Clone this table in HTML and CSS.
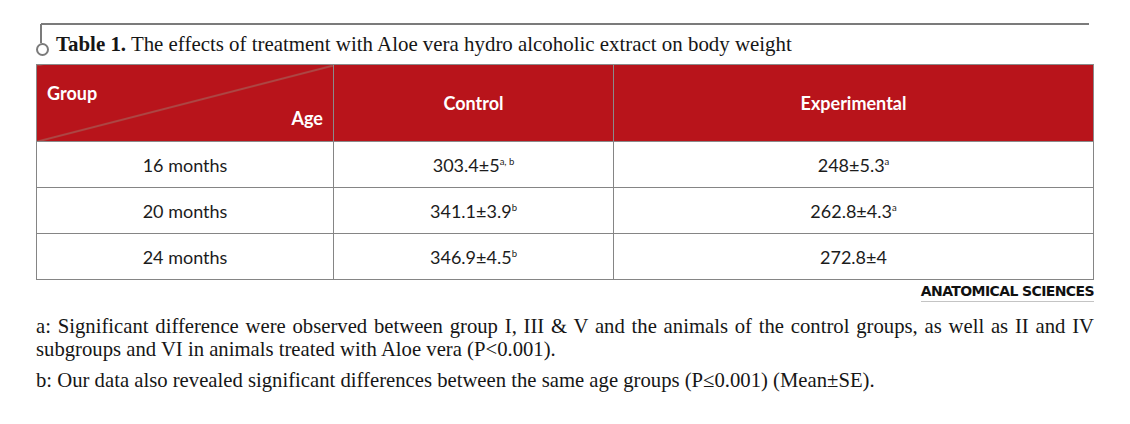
FILE: index.html
```html
<!DOCTYPE html>
<html lang="en">
<head>
<meta charset="utf-8">
<title>Table 1</title>
<link rel="stylesheet" href="styles.css">
</head>
<body>
<div class="page">
  <div class="caption">
    <p class="title"><b>Table 1.</b> The effects of treatment with Aloe vera hydro alcoholic extract on body weight</p>
  </div>
  <table class="data">
    <thead>
      <tr>
        <th class="corner">
          <div class="corner-group">Group</div>
          <div class="corner-age">Age</div>
        </th>
        <th class="col-control">Control</th>
        <th>Experimental</th>
      </tr>
    </thead>
    <tbody>
      <tr><td>16 months</td><td>303.4±5<sup>a, b</sup></td><td>248±5.3<sup>a</sup></td></tr>
      <tr><td>20 months</td><td>341.1±3.9<sup>b</sup></td><td>262.8±4.3<sup>a</sup></td></tr>
      <tr><td>24 months</td><td>346.9±4.5<sup>b</sup></td><td>272.8±4</td></tr>
    </tbody>
  </table>
  <div class="brand-row"><span class="brand">ANAT<span class="brand-o">O</span>MICAL SCIENCES</span></div>
  <div class="notes">
    <p class="note">a: Significant difference were observed between group I, III &amp; V and the animals of the control groups, as well as II and IV subgroups and VI in animals treated with Aloe vera (P&lt;0.001).</p>
    <p class="note">b: Our data also revealed significant differences between the same age groups (P≤0.001) (Mean±SE).</p>
  </div>
</div>
</body>
</html>
```

FILE: styles.css
```css
* { box-sizing: border-box; }
html, body { margin: 0; padding: 0; background: #fff; }
body { width: 1130px; height: 424px; overflow: hidden; }

.page {
  padding: 23px 36px 0 36px;
  width: 1130px;
  color: #1a1a1a;
}

.caption {
  position: relative;
  margin-left: 5px;
  width: 1048px;
  border-top: 2px solid #7b7b7b;
  padding: 7px 0 0 15px;
  height: 41px;
}
.caption::before {
  content: "";
  position: absolute;
  left: -1px;
  top: -1px;
  width: 2px;
  height: 19px;
  background: #7b7b7b;
}
.caption::after {
  content: "";
  position: absolute;
  left: -5px;
  top: 18px;
  width: 9px;
  height: 9px;
  border: 2px solid #7b7b7b;
  border-radius: 50%;
  background: #fff;
}
.title {
  margin: 0;
  font-family: "Liberation Serif", serif;
  font-size: 20.9px;
  line-height: 24px;
  color: #161616;
  white-space: nowrap;
}
.title b { font-weight: bold; }

.data {
  width: 1058px;
  border-collapse: collapse;
  font-family: Lato, "Open Sans", sans-serif;
  table-layout: fixed;
}
.data th, .data td {
  border: 1px solid #858585;
}
.data th {
  background: #b8141b;
  color: #fff;
  font-weight: bold;
  font-size: 18px;
  height: 77px;
  padding: 0;
  text-align: center;
  vertical-align: middle;
  border-color: #8a8a8a;
}
.data th.corner {
  width: 297px;
  padding: 16px 10px 12px 10px;
  background-color: #b8141b;
  background-image: linear-gradient(to bottom right, rgba(0,0,0,0) calc(50% - 1px), #a0766a 50%, rgba(0,0,0,0) calc(50% + 1px));
}
.data th.col-control { width: 280px; }
.corner-group { text-align: left; line-height: 22px; }
.corner-age { text-align: right; line-height: 22px; margin-top: 3px; }

.data td {
  height: 46px;
  font-size: 18px;
  text-align: center;
  color: #1c1c1c;
  padding: 0;
}
.data sup {
  font-size: 9.5px;
  vertical-align: 7px;
  line-height: 0;
}

.brand-row {
  display: flex;
  justify-content: flex-end;
  padding-top: 4px;
}
.brand {
  font-family: "DejaVu Sans", "Liberation Sans", sans-serif;
  font-weight: bold;
  font-size: 14px;
  letter-spacing: -0.6px;
  line-height: 15px;
  color: #111;
  padding: 0 0 2px 0;
  border-bottom: 1px solid #c4c4c4;
}

.notes {
  padding-top: 13px;
  font-family: "Liberation Serif", serif;
  font-size: 20.7px;
  line-height: 23px;
  color: #161616;
}
.note {
  margin: 0 0 8px 0;
  text-align: justify;
}
```
